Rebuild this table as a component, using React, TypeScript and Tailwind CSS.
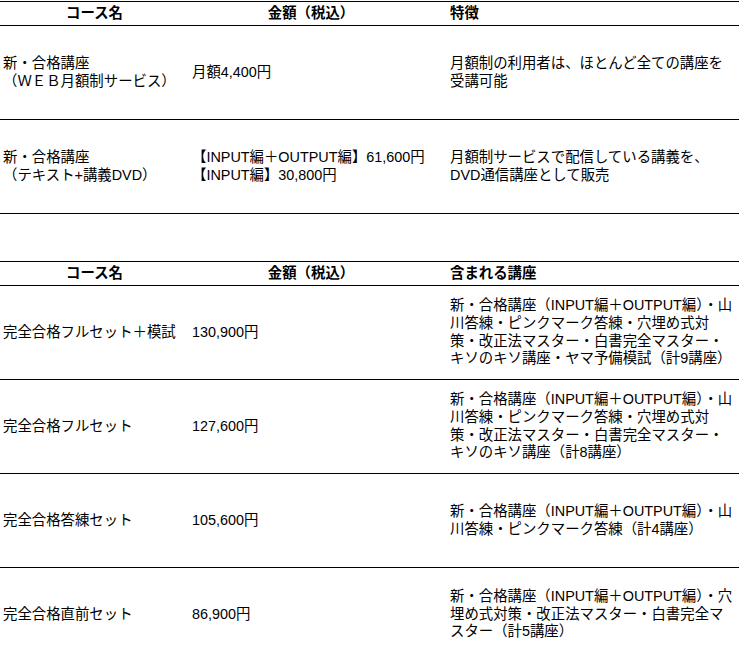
import React from "react";

type Row = { name: string[]; price: string[]; desc: string[] };

const table1: Row[] = [
  {
    name: ["新・合格講座", "（ＷＥＢ月額制サービス）"],
    price: ["月額4,400円"],
    desc: ["月額制の利用者は、ほとんど全ての講座を", "受講可能"],
  },
  {
    name: ["新・合格講座", "（テキスト+講義DVD）"],
    price: ["【INPUT編＋OUTPUT編】61,600円", "【INPUT編】30,800円"],
    desc: ["月額制サービスで配信している講義を、", "DVD通信講座として販売"],
  },
];

const table2: Row[] = [
  {
    name: ["完全合格フルセット＋模試"],
    price: ["130,900円"],
    desc: [
      "新・合格講座（INPUT編＋OUTPUT編）・山",
      "川答練・ピンクマーク答練・穴埋め式対",
      "策・改正法マスター・白書完全マスター・",
      "キソのキソ講座・ヤマ予備模試（計9講座）",
    ],
  },
  {
    name: ["完全合格フルセット"],
    price: ["127,600円"],
    desc: [
      "新・合格講座（INPUT編＋OUTPUT編）・山",
      "川答練・ピンクマーク答練・穴埋め式対",
      "策・改正法マスター・白書完全マスター・",
      "キソのキソ講座（計8講座）",
    ],
  },
  {
    name: ["完全合格答練セット"],
    price: ["105,600円"],
    desc: ["新・合格講座（INPUT編＋OUTPUT編）・山", "川答練・ピンクマーク答練（計4講座）"],
  },
  {
    name: ["完全合格直前セット"],
    price: ["86,900円"],
    desc: [
      "新・合格講座（INPUT編＋OUTPUT編）・穴",
      "埋め式対策・改正法マスター・白書完全マ",
      "スター（計5講座）",
    ],
  },
];

function Lines({ lines }: { lines: string[] }) {
  return (
    <div className="flex flex-col">
      {lines.map((l, i) => (
        <span key={i} className="whitespace-nowrap">
          {l}
        </span>
      ))}
    </div>
  );
}

function Table({ third, rows, className }: { third: string; rows: Row[]; className: string }) {
  return (
    <div className={`border-t border-black ${className}`}>
      <div className="grid grid-cols-[189px_258px_1fr] h-[24px] border-b border-black font-bold items-center">
        <div className="text-center">コース名</div>
        <div className="text-center pr-[14px]">金額（税込）</div>
        <div className="pl-[3px]">{third}</div>
      </div>
      {rows.map((r, i) => (
        <div
          key={i}
          className="grid grid-cols-[189px_258px_1fr] h-[94px] border-b border-black items-center"
        >
          <div className="pl-[3px]">
            <Lines lines={r.name} />
          </div>
          <div className="pl-[3px]">
            <Lines lines={r.price} />
          </div>
          <div className="pl-[3px]">
            <Lines lines={r.desc} />
          </div>
        </div>
      ))}
    </div>
  );
}

export default function App() {
  return (
    <div
      className="w-[739px] bg-white text-black text-[14.4px] leading-[17.8px] pt-px"
      style={{ fontFamily: '"Liberation Sans", "Noto Sans CJK JP", sans-serif' }}
    >
      <Table third="特徴" rows={table1} className="" />
      <Table third="含まれる講座" rows={table2} className="mt-[47px]" />
    </div>
  );
}
